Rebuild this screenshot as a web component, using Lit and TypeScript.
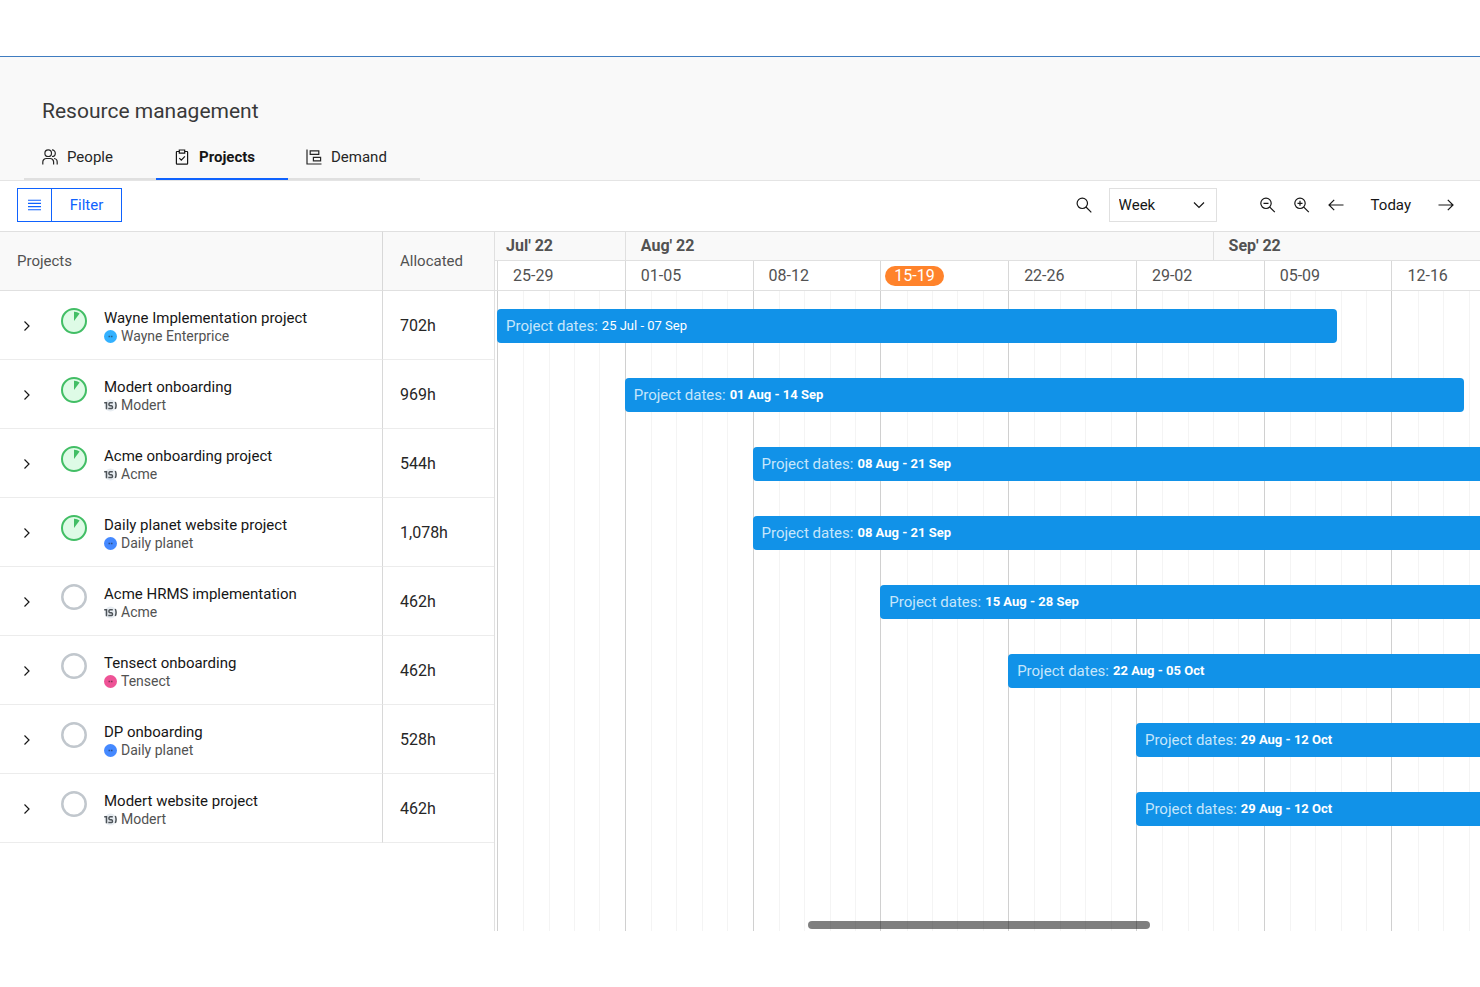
import { LitElement, html, svg, css } from "lit";
import { customElement, state } from "lit/decorators.js";
import { classMap } from "lit/directives/class-map.js";
import { styleMap } from "lit/directives/style-map.js";

/** Share of the chart's width that one week takes. */
const WEEK = 13;
/** Length of a project in weeks, as drawn in the chart. */
const SPAN = 6.57;

const weeks = ["25-29", "01-05", "08-12", "15-19", "22-26", "29-02", "05-09", "12-16"];
const currentWeek = "15-19";
const months = [
  { label: "Jul' 22", weeks: 1 },
  { label: "Aug' 22", weeks: 4.6 },
  { label: "Sep' 22", weeks: 2.4 },
];

type Logo = "mark" | "sky" | "blue" | "pink";
interface Project {
  name: string;
  client: string;
  logo: Logo;
  hours: string;
  started: boolean;
  start: number;
  dates: string;
}

const projects: Project[] = [
  { name: "Wayne Implementation project", client: "Wayne Enterprice", logo: "sky", hours: "702h", started: true, start: 0, dates: "25 Jul - 07 Sep" },
  { name: "Modert onboarding", client: "Modert", logo: "mark", hours: "969h", started: true, start: 1, dates: "01 Aug - 14 Sep" },
  { name: "Acme onboarding project", client: "Acme", logo: "mark", hours: "544h", started: true, start: 2, dates: "08 Aug - 21 Sep" },
  { name: "Daily planet website project", client: "Daily planet", logo: "blue", hours: "1,078h", started: true, start: 2, dates: "08 Aug - 21 Sep" },
  { name: "Acme HRMS implementation", client: "Acme", logo: "mark", hours: "462h", started: false, start: 3, dates: "15 Aug - 28 Sep" },
  { name: "Tensect onboarding", client: "Tensect", logo: "pink", hours: "462h", started: false, start: 4, dates: "22 Aug - 05 Oct" },
  { name: "DP onboarding", client: "Daily planet", logo: "blue", hours: "528h", started: false, start: 5, dates: "29 Aug - 12 Oct" },
  { name: "Modert website project", client: "Modert", logo: "mark", hours: "462h", started: false, start: 5, dates: "29 Aug - 12 Oct" },
];

const icons = {
  people: svg`<circle cx="6.2" cy="4.2" r="3.3"/><path d="M.8 15.6V13a3.5 3.5 0 0 1 3.5-3.5h3.8a3.5 3.5 0 0 1 3.5 3.5v2.6M10 .9a3.3 3.3 0 0 1 0 6.6M12 9.5a3.5 3.5 0 0 1 3.2 3.5v2.6"/>`,
  clipboard: svg`<path d="M5 2.5H3a.6.6 0 0 0-.6.6v11.5a.6.6 0 0 0 .6.6h10a.6.6 0 0 0 .6-.6V3.1a.6.6 0 0 0-.6-.6h-2"/><path d="M5.3 1h5.4v3.2H5.3zM5.3 9.1l2 2 3.6-3.7"/>`,
  demand: svg`<path d="M1 .5V15h14.5"/><path d="M4.2 1.9h8.6v3.5H4.2zM7.4 8.4h7.2v3.4H7.4z"/>`,
  rows: svg`<path d="M1 3.2h13M1 6.4h13M1 9.6h13M1 12.8h13" stroke-width="1.1"/>`,
  search: svg`<circle cx="6.3" cy="6.3" r="5.2"/><path d="m10 10 5.3 5.3"/>`,
  zoomOut: svg`<circle cx="6" cy="6.3" r="5.2"/><path d="m9.8 10.1 5 5M3.5 6.3h5"/>`,
  zoomIn: svg`<circle cx="6" cy="6.3" r="5.2"/><path d="m9.8 10.1 5 5M3.5 6.3h5M6 3.8v5"/>`,
  left: svg`<path d="M15.5 8H1.2M6.2 2.8 1 8l5.2 5.2"/>`,
  right: svg`<path d="M.5 8h14.3M9.8 2.8 15 8l-5.2 5.2"/>`,
  down: svg`<path d="m3 5.5 5 5 5-5"/>`,
  expand: svg`<path d="m5.5 3.5 4.5 4.5-4.5 4.5"/>`,
};

const icon = (name: keyof typeof icons) =>
  html`<svg class="icon" viewBox="0 0 16 16" aria-hidden="true">${icons[name]}</svg>`;

const progress = (started: boolean) => html`
  <svg class="progress" viewBox="0 0 26 26" aria-hidden="true">
    ${started
      ? svg`<circle cx="13" cy="13" r="12" fill="#defbe6" stroke="#42be65" stroke-width="2"/>
            <path d="M13 13V3.8a9.2 9.2 0 0 1 5.6 1.6z" fill="#42be65"/>`
      : svg`<circle cx="13" cy="13" r="11.7" fill="none" stroke="#c1c7cd" stroke-width="2.5"/>`}
  </svg>`;

const logoFill = { sky: "#33b1ff", blue: "#4589ff", pink: "#ee5396" };
const logo = (kind: Logo) => html`
  <svg class="logo" viewBox="0 0 13 13" aria-hidden="true">
    ${kind === "mark"
      ? svg`<circle cx="6.5" cy="6.5" r="6" fill="#e8edf2"/>
            <path d="M.2 3.8h2.3v6.4M8.8 3.8H6a1.5 1.5 0 0 0 0 2.9h1.4a1.5 1.5 0 0 1 0 2.9H4.3M11.3 3c.9 2 .9 5 0 7" fill="none" stroke="#4d5358" stroke-width="1.5"/>`
      : svg`<circle cx="6.5" cy="6.5" r="6.5" fill=${logoFill[kind]}/>
            <path d="M4.5 6.5h1.6M6.9 6.5h1.6" stroke="#161616" stroke-opacity=".5" stroke-width="1.4"/>`}
  </svg>`;

const base = css`
  * { box-sizing: border-box; }
  button, select {
    margin: 0; padding: 0; border: 0; border-radius: 0; background: none;
    font: inherit; color: inherit; cursor: pointer;
  }
  .icon { width: 16px; height: 16px; flex: none; display: block; fill: none; stroke: currentColor; stroke-width: 1.2; }
`;

@customElement("page-header")
export class PageHeader extends LitElement {
  static styles = [base, css`
    :host { display: block; background: #f9f9f9; border-top: 1px solid #3f7cc0; border-bottom: 1px solid #e4e4e4; }
    .title { margin: 0; padding: 40px 42px 0; font-size: 21px; line-height: 28px; font-weight: 400; color: #393939; }
    .tabs { display: flex; padding: 9px 24px 0; }
    .tab {
      display: flex; align-items: center; gap: 9px; width: 132px; height: 46px; padding: 2px 18px 0;
      border-bottom: 2px solid #e0e0e0; color: #262626;
    }
    .tab.active { border-color: #0f62fe; font-weight: 700; color: #161616; }
  `];

  @state() private active = "Projects";

  private tabs = [
    { name: "People", icon: "people" },
    { name: "Projects", icon: "clipboard" },
    { name: "Demand", icon: "demand" },
  ] as const;

  render() {
    return html`
      <h1 class="title">Resource management</h1>
      <div class="tabs" role="tablist">
        ${this.tabs.map((t) => html`
          <button role="tab" aria-selected=${this.active === t.name}
            class=${classMap({ tab: true, active: this.active === t.name })}
            @click=${() => (this.active = t.name)}>${icon(t.icon)}${t.name}</button>`)}
      </div>`;
  }
}

@customElement("chart-toolbar")
export class ChartToolbar extends LitElement {
  static styles = [base, css`
    :host { display: flex; align-items: center; height: 50px; padding: 0 17px 2px; color: #161616; }
    .filter { display: flex; height: 34px; border: 1px solid #0f62fe; color: #0f62fe; }
    .filter-rows { width: 34px; display: grid; place-items: center; border-right: 1px solid #0f62fe; }
    .filter-text { width: 69px; }
    .tools { display: flex; align-items: center; margin-left: auto; }
    .tool { width: 34px; height: 34px; display: grid; place-items: center; }
    .scale { display: grid; align-items: center; width: 108px; height: 34px; margin: 0 34px 0 8px; border: 1px solid #e0e0e0; }
    .scale-select { grid-area: 1 / 1; height: 100%; padding: 0 9px; appearance: none; outline-offset: 0; }
    .scale .icon { grid-area: 1 / 1; justify-self: end; margin-right: 9px; pointer-events: none; }
    .today { padding: 0 18px; height: 34px; }
  `];

  render() {
    return html`
      <div class="filter">
        <button class="filter-rows" aria-label="Row density">${icon("rows")}</button>
        <button class="filter-text">Filter</button>
      </div>
      <div class="tools">
        <button class="tool" aria-label="Search">${icon("search")}</button>
        <label class="scale">
          <select class="scale-select" aria-label="Time scale"><option>Week</option></select>
          ${icon("down")}
        </label>
        <button class="tool" aria-label="Zoom out">${icon("zoomOut")}</button>
        <button class="tool" aria-label="Zoom in">${icon("zoomIn")}</button>
        <button class="tool" aria-label="Previous">${icon("left")}</button>
        <button class="today">Today</button>
        <button class="tool" aria-label="Next">${icon("right")}</button>
      </div>`;
  }
}

@customElement("project-table")
export class ProjectTable extends LitElement {
  static styles = [base, css`
    :host { display: block; border-right: 1px solid #e0e0e0; }
    .table { width: 100%; border-collapse: separate; border-spacing: 0; table-layout: fixed; }
    .col-hours { width: 111px; }
    .head { height: 60px; padding: 0 17px; background: #f9f9f9; border-block: 1px solid #e0e0e0; text-align: left; font-weight: 400; color: #525252; }
    .cell { height: 69px; padding: 2px 17px 0; border-bottom: 1px solid #ececec; color: #262626; }
    .hours { font-size: 16px; }
    .name { border-right: 1px solid #d8d8d8; }
    .project { display: flex; align-items: center; height: 66px; }
    .expand { width: 20px; height: 24px; display: grid; place-items: center; color: #161616; }
    .progress { width: 26px; height: 26px; margin: 0 17px 10px 24px; flex: none; }
    .title { line-height: 20px; color: #161616; white-space: nowrap; }
    .client { display: flex; align-items: center; gap: 4px; font-size: 14px; line-height: 16px; color: #525252; }
    .logo { width: 13px; height: 13px; }
  `];

  render() {
    return html`
      <table class="table">
        <colgroup><col /><col class="col-hours" /></colgroup>
        <thead>
          <tr><th class="head name" scope="col">Projects</th><th class="head" scope="col">Allocated</th></tr>
        </thead>
        <tbody>
          ${projects.map((p) => html`
            <tr>
              <td class="cell name">
                <div class="project">
                  <button class="expand" aria-label="Expand ${p.name}">${icon("expand")}</button>
                  ${progress(p.started)}
                  <div>
                    <div class="title">${p.name}</div>
                    <div class="client">${logo(p.logo)}${p.client}</div>
                  </div>
                </div>
              </td>
              <td class="cell hours">${p.hours}</td>
            </tr>`)}
        </tbody>
      </table>`;
  }
}

@customElement("project-timeline")
export class ProjectTimeline extends LitElement {
  static styles = [base, css`
    :host { display: flex; flex-direction: column; position: relative; overflow: hidden; color: #525252; }
    .months, .weeks { display: flex; height: 30px; padding-left: 2px; font-size: 16px; }
    .months { background: #f9f9f9; border-block: 1px solid #e0e0e0; font-weight: 700; }
    .month { flex: none; display: flex; align-items: center; padding-left: 15px; border-left: 1px solid #e0e0e0; }
    .month:first-child { padding-left: 9px; border-left: 0; }
    .weeks { border-bottom: 1px solid #e0e0e0; }
    .week { flex: none; display: flex; align-items: center; border-left: 1px solid #d8d8d8; }
    .week-label { margin-left: 4px; padding: 0 11px; line-height: 20px; }
    .week-label.current { padding: 0 9px; border-radius: 10px; background: #ff832b; color: #fff; }
    .body { flex: 1; display: grid; padding-left: 2px; }
    .days, .bars { grid-area: 1 / 1; min-width: 0; }
    .days { display: flex; }
    .day-week { flex: none; display: grid; grid-template-columns: repeat(5, 1fr); border-left: 1px solid #d0d0d0; }
    .day + .day { border-left: 1px solid #f4f4f4; }
    .row { display: flex; align-items: center; height: 69px; }
    .bar {
      flex: none; display: flex; align-items: center; gap: 4px; height: 34px; padding-left: 9px;
      border-radius: 4px; background: #1192e8; color: #c6e6fb; white-space: nowrap;
    }
    .dates { font-size: 13px; font-weight: 700; color: #fff; }
    .row:first-child .dates { font-weight: 400; }
    .scrollbar { position: absolute; left: 31.8%; bottom: 2px; width: 34.7%; height: 8px; border-radius: 4px; background: rgba(0, 0, 0, 0.5); }
  `];

  private width(weekCount: number) {
    return styleMap({ width: `${weekCount * WEEK}%` });
  }

  render() {
    return html`
      <div class="months">
        ${months.map((m) => html`<div class="month" style=${this.width(m.weeks)}>${m.label}</div>`)}
      </div>
      <div class="weeks">
        ${weeks.map((w) => html`
          <div class="week" style=${this.width(1)}>
            <span class=${classMap({ "week-label": true, current: w === currentWeek })}>${w}</span>
          </div>`)}
      </div>
      <div class="body">
        <div class="days">
          ${weeks.map(() => html`
            <div class="day-week" style=${this.width(1)}>
              ${[0, 1, 2, 3, 4].map(() => html`<div class="day"></div>`)}
            </div>`)}
        </div>
        <div class="bars">
          ${projects.map((p) => html`
            <div class="row">
              <div class="bar" style=${styleMap({ marginLeft: `${p.start * WEEK}%`, width: `${SPAN * WEEK}%` })}>
                <span>Project dates:</span><span class="dates">${p.dates}</span>
              </div>
            </div>`)}
        </div>
      </div>
      <div class="scrollbar"></div>`;
  }
}

@customElement("app-root")
export class AppRoot extends LitElement {
  static styles = [base, css`
    :host {
      display: flex; flex-direction: column; min-height: 100vh; box-sizing: border-box; padding: 56px 0;
      background: #fff; font: 15px/20px Roboto, "Liberation Sans", sans-serif;
    }
    .plan { flex: 1; display: grid; grid-template-columns: 495px minmax(0, 1fr); }
  `];

  render() {
    return html`
      <page-header></page-header>
      <chart-toolbar></chart-toolbar>
      <main class="plan">
        <project-table></project-table>
        <project-timeline></project-timeline>
      </main>`;
  }
}
